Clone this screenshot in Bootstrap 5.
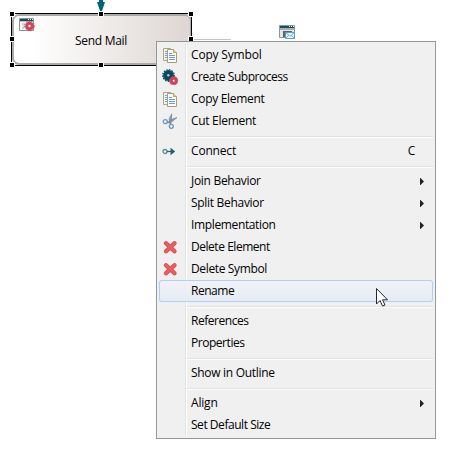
<!DOCTYPE html>
<html lang="en">
<head>
<meta charset="utf-8">
<title>Process editor</title>
<link href="https://cdn.jsdelivr.net/npm/bootstrap@5.3.0/dist/css/bootstrap.min.css" rel="stylesheet">
<style>
body{width:455px;height:459px;overflow:hidden;background:#fff;color:#000;font:12px/22px "Open Sans","Noto Sans",sans-serif}
.canvas-layer{left:0;top:0}
.node-label{left:75px;top:30px;letter-spacing:-.3px}
.ctx-menu{left:156px;top:41px;width:280px;height:398px;padding:2px;border:1px solid #979797;border-radius:0;background:#f0f0f0;display:block;min-width:0;margin:0;color:#000;font-size:12px}
.ctx-menu::before{content:"";position:absolute;left:28px;top:2px;bottom:2px;width:2px;background:linear-gradient(90deg,#e2e3e3 50%,#fff 50%)}
.ctx-item{height:22px;padding:0 18px 0 3px;position:relative;line-height:22px;white-space:nowrap;border-radius:3px;letter-spacing:-.3px}
.ctx-item .pic{width:16px;height:16px;flex:none;margin-right:13px}
.ctx-item.is-hot{background:linear-gradient(#f2f4f8cc,#e3eaf5cc);box-shadow:inset 0 0 0 1px #aecff7}
.ctx-sep{height:2px;margin:4px 0 2px 28px;background:linear-gradient(#e0e0e0 50%,#fff 50%)}
.ls-a{letter-spacing:-.18px}
.ls-b{letter-spacing:-.36px}
.ls-c{letter-spacing:-.46px}
.arrow{width:4px;height:7px;margin-left:auto;margin-right:-9px}
.hot-key{margin-left:auto}
.pointer-icon{left:376px;top:287px;z-index:1100}
</style>
<script src="https://cdn.jsdelivr.net/npm/bootstrap@5.3.0/dist/js/bootstrap.bundle.min.js"></script>
</head>
<body class="position-relative">
<svg class="position-absolute canvas-layer" width="455" height="80" viewBox="0 0 455 80">
  <defs>
    <linearGradient id="nodeFill"><stop offset=".1" stop-color="#fff"/><stop offset="1" stop-color="#ddd6d3"/></linearGradient>
  </defs>
  <rect x="13" y="15" width="178" height="49" rx="6" fill="url(#nodeFill)" stroke="#aaa" stroke-width="2"/>
  <rect x="11.500" y="13.500" width="180" height="52" fill="none" stroke="#000"/>
  <path d="M99 0h4v2h2l-3 9h-2l-3-9h2z" fill="#006478"/>
  <path d="M194 39.500h37" stroke="#c4c4c4"/>
  <path d="M9.500 11.500h5v5h-5zM98.500 11.500h5v5h-5zM188.500 11.500h5v5h-5zM9.500 36.500h5v5h-5zM188.500 36.500h5v5h-5zM9.500 62.500h5v5h-5zM98.500 62.500h5v5h-5z" stroke="#fff"/>
  <g transform="translate(19 18)">
    <path d="M.5.5h14v12H.5z" fill="#f5f7f7" stroke="#8c9296"/><path d="M1 1h13v2H1z" fill="#174e63"/><path d="M9 1h1v1H9zM11 1h1v1h-1zM13 1h1v1h-1z" fill="#fff"/><path d="M1 3h13v1H1z" fill="#b7c2c8"/><path d="M3 6h3M4 8h2M3 10h2" stroke="#9fb0c0"/>
    <circle cx="10.500" cy="8" r="4.300" fill="#d04354"/><circle cx="10.500" cy="8" r="4.800" fill="none" stroke="#d04354" stroke-dasharray="1.500 1.100"/><circle cx="10.500" cy="8" r="1.200" fill="#fff"/>
  </g>
  <g transform="translate(279 25)">
    <path d="M.5.5h15v12H.5z" fill="#e5e7e7" stroke="#8e9497"/><path d="M1 1h14v2H1z" fill="#174e63"/><path d="M10 1h1v1h-1zM12 1h1v1h-1zM14 1h1v1h-1z" fill="#fff"/><path d="M1 3h14v2H1z" fill="#a8b0b4"/><path d="M4 6h9v2H6v4H4z" fill="#59636b"/>
    <path d="M6.500 7.500h9v6h-9z" fill="#eaf5ff" stroke="#5b9ed0"/><path d="M7 8l4 3.200L15 8M7 13l2.800-3M15 13l-2.800-3" fill="none" stroke="#5b9ed0" stroke-width=".8"/>
  </g>
</svg>
<svg width="0" height="0" class="position-absolute">
  <symbol id="i-copy" viewBox="0 0 16 16">
    <path d="M1.500 1.500h7l2 2v10h-9z" fill="#eef3f9" stroke="#b4a477"/><path d="M3 4.500h3M3 6.500h3M3 8.500h3M3 10.500h3" stroke="#7da2cc"/>
    <path d="M5.500 2.500h6l3 3v10h-9z" fill="#f8fafd" stroke="#a99c76"/><path d="M11.500 2v3.500h3" fill="#f5d778" stroke="#c6a34d"/><path d="M7 6.500h3M7 8.500h6M7 10.500h6M7 12.500h6" stroke="#729bc8"/>
  </symbol>
  <symbol id="i-gears" viewBox="0 0 16 16">
    <circle cx="6.500" cy="6.500" r="5.400" fill="#07495b"/><circle cx="6.500" cy="6.500" r="5.800" fill="none" stroke="#07495b" stroke-width="1.200" stroke-dasharray="1.600 1.100"/><circle cx="6.300" cy="6.300" r="1.200" fill="#b9ccd2"/>
    <circle cx="11.700" cy="11.700" r="4" fill="#cf4358"/><circle cx="11.700" cy="11.700" r="4.200" fill="none" stroke="#cf4358" stroke-dasharray="1.500 .7"/><circle cx="11.700" cy="11.700" r="1" fill="#fff"/>
  </symbol>
  <symbol id="i-cut" viewBox="0 0 16 16">
    <path d="M9.800 .8L7.200 5.500l.3 3L9 9.500zM15 4.500L9 6.500 6 9.500l2 .8z" fill="#94a3b7" stroke="#71839b" stroke-width=".7"/><circle cx="3.300" cy="8.700" r="2" fill="none" stroke="#6499c9" stroke-width="1.300"/><circle cx="9.300" cy="13.300" r="2" fill="none" stroke="#6499c9" stroke-width="1.300"/><path d="M5 9l3 .3 1 2" fill="none" stroke="#71839b"/>
  </symbol>
  <symbol id="i-connect" viewBox="0 0 16 16"><circle cx="3" cy="8.500" r="2" fill="none" stroke="#5d8794" stroke-width="1.300"/><path d="M5 8.500h6" stroke="#246071" stroke-width="1.200"/><path d="M8.500 4.800l4.700 3.700-4.700 3.700z" fill="#246071"/></symbol>
  <symbol id="i-delete" viewBox="0 0 16 16"><path d="M4 4.300l8.500 8M12.500 4.300l-8.500 8" stroke="#cf474b" stroke-width="4.300" stroke-linecap="round"/><path d="M4 4.300l8.500 8M12.500 4.300l-8.500 8" stroke="#ea6060" stroke-width="2.800" stroke-linecap="round"/></symbol>
  <symbol id="i-more" viewBox="0 0 4 7"><path d="M0 0h.5L4 3.500.5 7H0z" fill="#222"/></symbol>
</svg>
<div class="position-absolute node-label">Send Mail</div>
<div class="dropdown-menu show position-absolute ctx-menu">
  <div class="ctx-item d-flex align-items-center"><svg class="pic"><use href="#i-copy"/></svg><span class="ls-a">Copy Symbol</span></div>
  <div class="ctx-item d-flex align-items-center"><svg class="pic"><use href="#i-gears"/></svg><span class="ls-c">Create Subprocess</span></div>
  <div class="ctx-item d-flex align-items-center"><svg class="pic"><use href="#i-copy"/></svg><span>Copy Element</span></div>
  <div class="ctx-item d-flex align-items-center"><svg class="pic"><use href="#i-cut"/></svg><span>Cut Element</span></div>
  <div class="ctx-sep"></div>
  <div class="ctx-item d-flex align-items-center"><svg class="pic"><use href="#i-connect"/></svg><span class="ls-a">Connect</span><span class="hot-key">C</span></div>
  <div class="ctx-sep"></div>
  <div class="ctx-item d-flex align-items-center"><i class="pic"></i><span>Join Behavior</span><svg class="arrow"><use href="#i-more"/></svg></div>
  <div class="ctx-item d-flex align-items-center"><i class="pic"></i><span>Split Behavior</span><svg class="arrow"><use href="#i-more"/></svg></div>
  <div class="ctx-item d-flex align-items-center"><i class="pic"></i><span class="ls-b">Implementation</span><svg class="arrow"><use href="#i-more"/></svg></div>
  <div class="ctx-item d-flex align-items-center"><svg class="pic"><use href="#i-delete"/></svg><span class="ls-c">Delete Element</span></div>
  <div class="ctx-item d-flex align-items-center"><svg class="pic"><use href="#i-delete"/></svg><span class="ls-b">Delete Symbol</span></div>
  <div class="ctx-item d-flex align-items-center is-hot"><i class="pic"></i><span class="ls-c">Rename</span></div>
  <div class="ctx-sep"></div>
  <div class="ctx-item d-flex align-items-center"><i class="pic"></i><span class="ls-c">References</span></div>
  <div class="ctx-item d-flex align-items-center"><i class="pic"></i><span class="ls-c">Properties</span></div>
  <div class="ctx-sep"></div>
  <div class="ctx-item d-flex align-items-center"><i class="pic"></i><span>Show in Outline</span></div>
  <div class="ctx-sep"></div>
  <div class="ctx-item d-flex align-items-center"><i class="pic"></i><span class="ls-a">Align</span><svg class="arrow"><use href="#i-more"/></svg></div>
  <div class="ctx-item d-flex align-items-center"><i class="pic"></i><span class="ls-c">Set Default Size</span></div>
</div>
<svg class="position-absolute pointer-icon" width="13" height="20" viewBox="0 0 13 20"><path d="M.5 1.500v15.500l3.500-3.500 2.500 5.500 2.500-1-2.500-5.200h5z" fill="#fff" stroke="#252540"/></svg>
</body>
</html>
